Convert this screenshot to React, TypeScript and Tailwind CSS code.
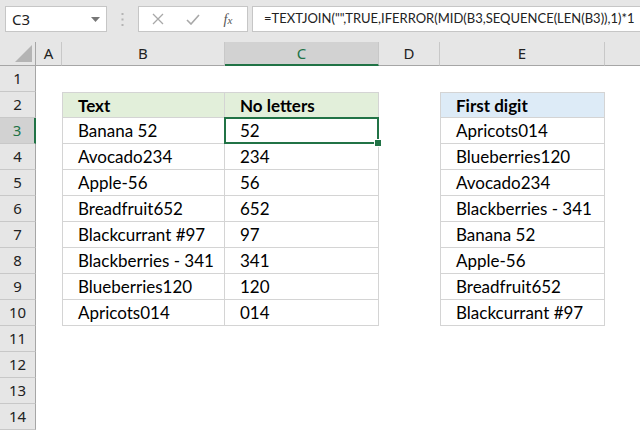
import React from "react";

const colB = ["Text", "Banana 52", "Avocado234", "Apple-56", "Breadfruit652", "Blackcurrant #97", "Blackberries - 341", "Blueberries120", "Apricots014"];
const colC = ["No letters", "52", "234", "56", "652", "97", "341", "120", "014"];
const colE = ["First digit", "Apricots014", "Blueberries120", "Avocado234", "Blackberries - 341", "Banana 52", "Apple-56", "Breadfruit652", "Blackcurrant #97"];

const cellFont = { fontFamily: "Lato, 'Liberation Sans', sans-serif" };
const uiFont = { fontFamily: "'Noto Sans', 'Open Sans', sans-serif" };

function ColHead({ label, selected, last }: { label: string; selected?: boolean; last?: boolean }) {
  return (
    <div
      className={
        "flex items-center justify-center text-[15px] border-b border-[#a6a6a6] " +
        (last ? "" : "border-r border-r-[#c8c8c8] ") +
        (selected ? "bg-[#d2d2d2] text-[#217346] border-b-2 border-b-[#217346]" : "bg-[#e6e6e6] text-[#222]")
      }
      style={uiFont}
    >
      {label}
    </div>
  );
}

export default function App() {
  const rows = Array.from({ length: 14 }, (_, i) => i + 1);
  return (
    <div className="w-[640px] h-[435px] overflow-hidden bg-white flex flex-col">
      {/* Formula bar */}
      <div className="h-[42px] bg-[#e6e6e6] flex items-start pt-[6px] pl-[5px] shrink-0">
        <div className="w-[102px] h-[26px] bg-white border border-[#c6c6c6] flex items-center justify-between pl-[6px] pr-[6px]">
          <span className="text-[15px] text-[#222]" style={uiFont}>C3</span>
          <svg width="9" height="5" viewBox="0 0 9 5"><path d="M0 0h9L4.5 5z" fill="#777" /></svg>
        </div>
        <div className="w-[31px] h-[26px] flex items-center justify-center">
          <svg width="3" height="13" viewBox="0 0 3 13">
            <rect x="0.5" y="0" width="2" height="2" fill="#b4b4b4" />
            <rect x="0.5" y="5.5" width="2" height="2" fill="#b4b4b4" />
            <rect x="0.5" y="11" width="2" height="2" fill="#b4b4b4" />
          </svg>
        </div>
        <div className="w-[110px] h-[26px] bg-white border border-[#c6c6c6] flex items-center">
          <div className="w-[38px] flex justify-center">
            <svg width="12" height="12" viewBox="0 0 12 12"><path d="M1 1L11 11M11 1L1 11" stroke="#a8a8a8" strokeWidth="1.3" /></svg>
          </div>
          <div className="w-[32px] flex justify-center">
            <svg width="14" height="11" viewBox="0 0 14 11"><path d="M1 6L5 10L13 1" stroke="#a8a8a8" strokeWidth="1.6" fill="none" /></svg>
          </div>
          <div className="flex-1 flex justify-center">
            <span className="text-[14px] italic text-[#555]" style={{ fontFamily: "'Liberation Serif', serif" }}>
              f<span className="text-[11px]">x</span>
            </span>
          </div>
        </div>
        <div className="ml-[4px] flex-1 h-[26px] bg-white border border-[#c6c6c6] border-r-0 flex items-center pl-[11px] overflow-hidden whitespace-nowrap">
          <span className="text-[13px] text-[#222]" style={cellFont}>
            =TEXTJOIN("",TRUE,IFERROR(MID(B3,SEQUENCE(LEN(B3)),1)*1
          </span>
        </div>
      </div>

      {/* Sheet grid */}
      <div className="grid grid-cols-[36px_26px_163px_154px_61px_165px_1fr] grid-rows-[24px_repeat(14,26px)] bg-white">
        {/* corner */}
        <div className="bg-[#e6e6e6] border-r border-r-[#a6a6a6] border-b border-b-[#a6a6a6] flex items-end justify-end pr-[3px] pb-[3px]">
          <svg width="17" height="17" viewBox="0 0 17 17"><path d="M17 0V17H0z" fill="#b4b4b4" /></svg>
        </div>
        <ColHead label="A" />
        <ColHead label="B" />
        <ColHead label="C" selected />
        <ColHead label="D" />
        <ColHead label="E" />
        <ColHead label="" last />

        {rows.map((r) => {
          const ti = r - 2;
          const inTable = ti >= 0 && ti <= 8;
          const isHeader = ti === 0;
          const selected = r === 3;
          return (
            <React.Fragment key={r}>
              <div
                className={
                  "flex items-center justify-center text-[15px] border-b border-b-[#c8c8c8] " +
                  (selected
                    ? "bg-[#d2d2d2] text-[#217346] border-r-2 border-r-[#217346]"
                    : "bg-[#e6e6e6] text-[#222] border-r border-r-[#a6a6a6]")
                }
                style={uiFont}
              >
                {r}
              </div>
              <div />
              {inTable ? (
                <>
                  <div
                    className={
                      "flex items-center pl-[15px] pt-[1px] text-[17px] text-black border-l border-r border-b border-[#d4d4d4] " +
                      (isHeader ? "bg-[#e2efda] font-bold border-t" : "")
                    }
                    style={cellFont}
                  >
                    {colB[ti]}
                  </div>
                  <div
                    className={
                      "relative flex items-center pl-[15px] pt-[1px] text-[17px] text-black border-r border-b border-[#d4d4d4] " +
                      (isHeader ? "bg-[#e2efda] font-bold border-t" : "")
                    }
                    style={cellFont}
                  >
                    {colC[ti]}
                    {selected && (
                      <div className="absolute z-10 left-[-1px] top-[-1px] right-[-1px] bottom-[-1px] border-2 border-[#217346]">
                        <div className="absolute right-[-5px] bottom-[-5px] w-[8px] h-[8px] bg-[#217346] border border-white" />
                      </div>
                    )}
                  </div>
                  <div />
                  <div
                    className={
                      "flex items-center pl-[15px] pt-[1px] text-[17px] text-black border-l border-r border-b border-[#d4d4d4] " +
                      (isHeader ? "bg-[#ddebf7] font-bold border-t" : "")
                    }
                    style={cellFont}
                  >
                    {colE[ti]}
                  </div>
                  <div />
                </>
              ) : (
                <>
                  <div />
                  <div />
                  <div />
                  <div />
                  <div />
                </>
              )}
            </React.Fragment>
          );
        })}
      </div>
    </div>
  );
}
